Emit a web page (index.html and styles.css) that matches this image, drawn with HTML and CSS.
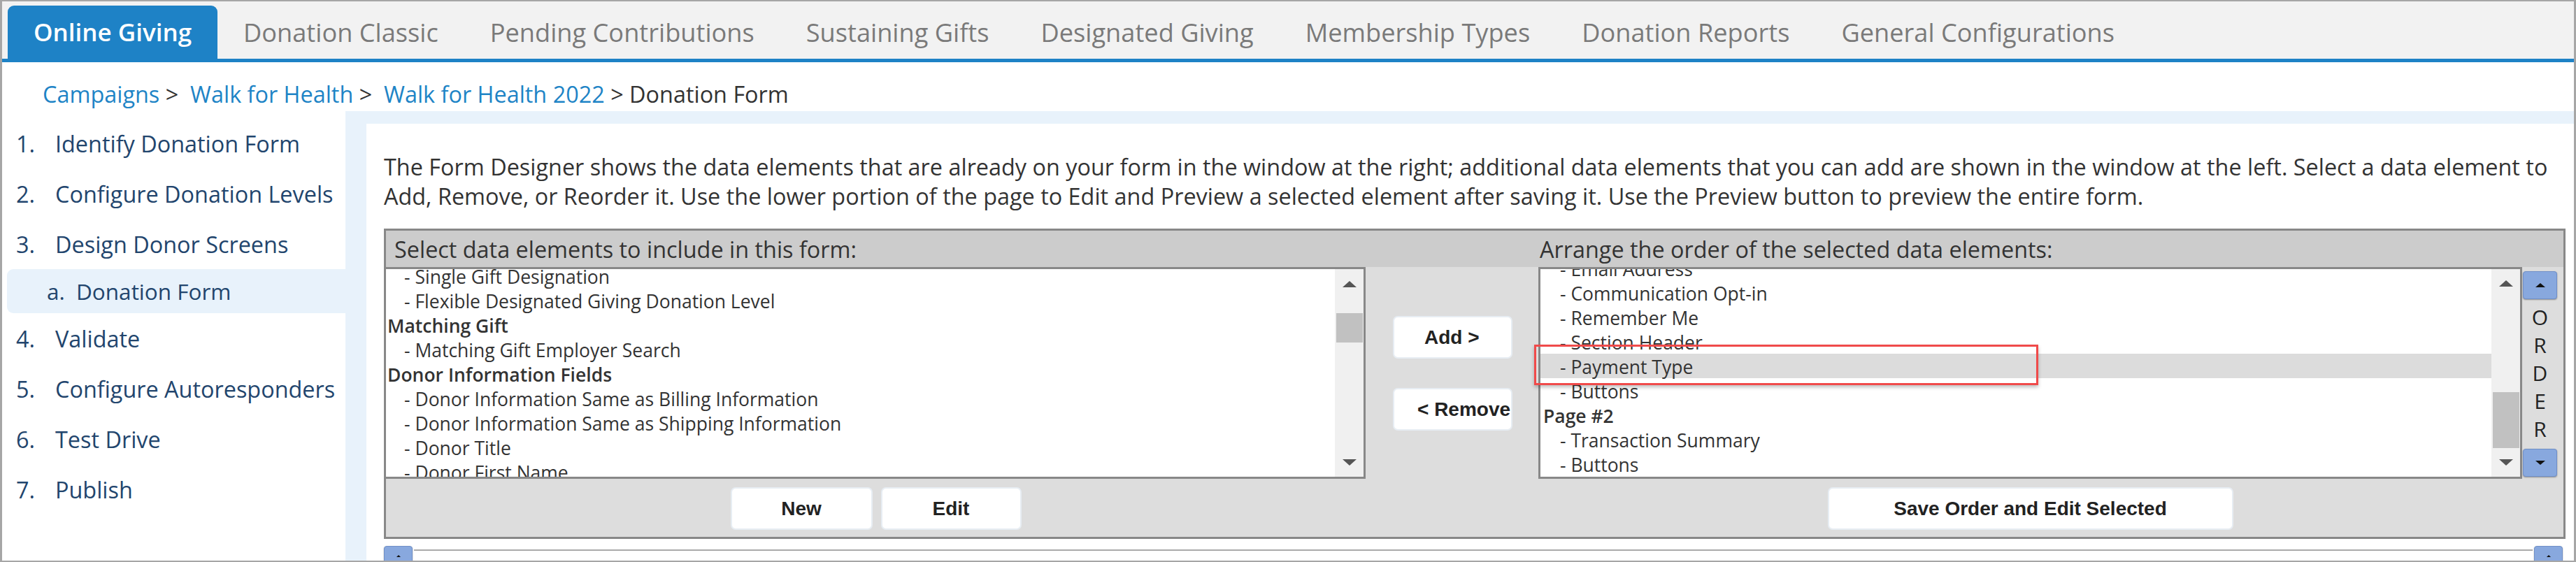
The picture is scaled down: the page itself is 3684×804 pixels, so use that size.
FILE: index.html
```html
<!DOCTYPE html>
<html lang="en">
<head>
    <meta charset="UTF-8">
    <meta name="viewport" content="width=device-width, initial-scale=1.0">
    <title>Donation Form - Form Designer</title>
    <link rel="stylesheet" href="styles.css">
</head>
<body>
<div class="frame">
    <nav class="tabs">
        <a class="tab active" href="#">Online Giving</a>
        <a class="tab" href="#">Donation Classic</a>
        <a class="tab" href="#">Pending Contributions</a>
        <a class="tab" href="#">Sustaining Gifts</a>
        <a class="tab" href="#">Designated Giving</a>
        <a class="tab" href="#">Membership Types</a>
        <a class="tab" href="#">Donation Reports</a>
        <a class="tab" href="#">General Configurations</a>
    </nav>

    <div class="crumbs">
        <a href="#">Campaigns</a> &gt;&nbsp; <a href="#">Walk for Health</a> &gt;&nbsp; <a href="#">Walk for Health 2022</a> &gt; Donation Form
    </div>

    <div class="layout">
        <ol class="steps">
            <li><span class="num">1.</span>Identify Donation Form</li>
            <li><span class="num">2.</span>Configure Donation Levels</li>
            <li><span class="num">3.</span>Design Donor Screens</li>
            <li class="sub"><span class="num">a.</span>Donation Form</li>
            <li><span class="num">4.</span>Validate</li>
            <li><span class="num">5.</span>Configure Autoresponders</li>
            <li><span class="num">6.</span>Test Drive</li>
            <li><span class="num">7.</span>Publish</li>
        </ol>

        <main class="content">
            <div class="panel">
                <p class="intro">The Form Designer shows the data elements that are already on your form in the window at the right; additional data elements that you can add are shown in the window at the left. Select a data element to<br>Add, Remove, or Reorder it. Use the lower portion of the page to Edit and Preview a selected element after saving it. Use the Preview button to preview the entire form.</p>

                <div class="designer">
                    <div class="hdr hdr-left">Select data elements to include in this form:</div>
                    <div class="hdr hdr-right">Arrange the order of the selected data elements:</div>

                    <div class="listbox lb-left">
                        <div class="items">
                            <ul class="rows rows-left">
                                <li class="opt">- Single Gift Designation</li>
                                <li class="opt">- Flexible Designated Giving Donation Level</li>
                                <li class="grp">Matching Gift</li>
                                <li class="opt">- Matching Gift Employer Search</li>
                                <li class="grp">Donor Information Fields</li>
                                <li class="opt">- Donor Information Same as Billing Information</li>
                                <li class="opt">- Donor Information Same as Shipping Information</li>
                                <li class="opt">- Donor Title</li>
                                <li class="opt">- Donor First Name</li>
                                <li class="opt">- Donor Last Name</li>
                            </ul>
                        </div>
                        <div class="sbar">
                            <div class="sbar-btn"><span class="tri-up"></span></div>
                            <div class="track"><div class="thumb thumb-left"></div></div>
                            <div class="sbar-btn"><span class="tri-down"></span></div>
                        </div>
                    </div>

                    <div class="movers">
                        <button class="mv-btn mv-add">Add &gt;</button>
                        <button class="mv-btn mv-remove">&lt; Remove</button>
                    </div>

                    <div class="listbox lb-right">
                        <div class="items">
                            <ul class="rows rows-right">
                                <li class="opt">- Email Address</li>
                                <li class="opt">- Communication Opt-in</li>
                                <li class="opt">- Remember Me</li>
                                <li class="opt">- Section Header</li>
                                <li class="opt selected">- Payment Type</li>
                                <li class="opt">- Buttons</li>
                                <li class="grp">Page #2</li>
                                <li class="opt">- Transaction Summary</li>
                                <li class="opt">- Buttons</li>
                            </ul>
                        </div>
                        <div class="sbar">
                            <div class="sbar-btn"><span class="tri-up"></span></div>
                            <div class="track"><div class="thumb thumb-right"></div></div>
                            <div class="sbar-btn"><span class="tri-down"></span></div>
                        </div>
                        <div class="callout"></div>
                    </div>

                    <div class="order">
                        <button class="blue-btn"><span class="mini-up"></span></button>
                        <div class="order-word"><span>O</span><span>R</span><span>D</span><span>E</span><span>R</span></div>
                        <button class="blue-btn"><span class="mini-down"></span></button>
                    </div>

                    <div class="actions act-left">
                        <button class="act-btn btn-new">New</button>
                        <button class="act-btn btn-edit">Edit</button>
                    </div>
                    <div class="actions act-right">
                        <button class="act-btn btn-save">Save Order and Edit Selected</button>
                    </div>
                </div>

                <div class="hscroll">
                    <button class="blue-btn small"><span class="mini-up"></span></button>
                    <div class="hline"></div>
                    <button class="blue-btn small"><span class="mini-up"></span></button>
                </div>
            </div>
        </main>
    </div>
</div>
</body>
</html>
```

FILE: styles.css
```css
* { box-sizing: border-box; }
html, body { margin: 0; padding: 0; }
body { font-family: "Open Sans", "Liberation Sans", Arial, sans-serif; color: #333; background: #fff; }
a { text-decoration: none; }
button { font-family: inherit; cursor: pointer; }

.frame { width: 3684px; height: 804px; border: solid #a6a6a6; border-width: 2px 3px; display: flex; flex-direction: column; overflow: hidden; }

/* top tabs */
.tabs { display: flex; background: #f2f2f2; padding: 6px 0 0 8px; border-bottom: 5px solid #1e82c6; flex: none; }
.tab { height: 76px; line-height: 76px; padding: 0 37px; font-size: 36.2px; font-weight: 400; color: #7a7a7a; white-space: nowrap; }
.tab.active { background: #1e82c6; color: #fff; border-radius: 9px 9px 0 0; font-size: 35px; font-weight: 600; }

/* breadcrumb */
.crumbs { height: 70px; padding: 20px 0 0 58px; line-height: 50px; font-size: 32.4px; color: #333; flex: none; white-space: nowrap; }
.crumbs a { color: #1e84c6; }

.layout { display: flex; flex: 1; min-height: 0; }

/* steps sidebar */
.steps { width: 491px; flex: none; list-style: none; margin: 0; padding: 10px 0 0 0; font-size: 32.4px; color: #22456d; }
.steps li { display: flex; height: 72px; line-height: 72px; padding-left: 20px; white-space: nowrap; }
.steps .num { width: 56px; flex: none; }
.steps li.sub { height: 63px; line-height: 63px; margin-left: 7px; padding-left: 57px; background: #e8f2fb; border-radius: 9px 0 0 9px; font-size: 31.5px; }
.steps li.sub .num { width: 42px; }

/* main area */
.content { flex: 1; background: #e8f2fb; padding: 18px 0 0 30px; min-width: 0; }
.panel { background: #fff; height: 100%; padding: 40px 12px 0 25px; }
.intro { margin: 0 0 26px; font-size: 32.4px; line-height: 42px; color: #333; white-space: nowrap; }

/* form designer box */
.designer { display: grid; grid-template-columns: 1401px 247px 1407px 59px; grid-template-rows: 52px 303px 83px; border: 3px solid #888; background: #ddd; }
.hdr { background: #ccc; font-size: 32.4px; line-height: 52px; color: #333; white-space: nowrap; }
.hdr-left { grid-column: 1 / 3; padding-left: 12px; }
.hdr-right { grid-column: 3 / 5; padding-left: 2px; }

.listbox { display: flex; background: #fff; border: 3px solid #888; position: relative; }
.lb-left { grid-column: 1; border-left: none; }
.lb-right { grid-column: 3; }
.items { flex: 1; overflow: hidden; }
.rows { list-style: none; margin: 0; padding: 0; font-size: 26.5px; color: #333; }
.rows-left { margin-top: -8px; }
.rows-right { margin-top: -19px; padding-left: 2px; }
.rows li { height: 35px; line-height: 39px; white-space: nowrap; }
.rows .opt { padding-left: 26px; }
.rows .grp { padding-left: 2px; font-weight: 600; }
.rows .selected { background: #dcdcdc; margin-left: -2px; padding-left: 28px; }

.sbar { width: 41px; flex: none; background: #f0f0f0; display: flex; flex-direction: column; }
.sbar-btn { height: 42px; display: flex; align-items: center; justify-content: center; }
.tri-up { border-left: 10px solid transparent; border-right: 10px solid transparent; border-bottom: 9px solid #555; }
.tri-down { border-left: 10px solid transparent; border-right: 10px solid transparent; border-top: 9px solid #555; }
.track { flex: 1; padding: 0 1px 0 2px; }
.thumb { background: #c1c1c1; }
.thumb-left { margin-top: 21px; height: 42px; }
.thumb-right { margin-top: 135px; height: 80px; }

.callout { position: absolute; left: -9px; top: 108px; width: 721px; height: 58px; border: 3px solid #f04a4a; box-shadow: 0 3px 5px rgba(0, 0, 0, 0.25); pointer-events: none; }

.movers { grid-column: 2; padding: 70px 0 0 39px; display: flex; flex-direction: column; gap: 42px; }
.mv-btn { width: 171px; height: 61px; background: #fff; border: 2px solid #e7edf3; border-radius: 7px; font-family: "Liberation Sans", Arial, sans-serif; font-size: 28px; font-weight: bold; color: #222; white-space: nowrap; overflow: hidden; text-align: left; }
.mv-add { padding: 0 0 0 43px; }
.mv-remove { padding: 0 0 0 33px; }

.order { grid-column: 4; grid-row: 2; padding: 6px 9px 0 1px; display: flex; flex-direction: column; align-items: center; }
.order-word { display: flex; flex-direction: column; align-items: center; margin: 6px 0 8px; font-size: 30px; line-height: 40px; color: #222; }
.blue-btn { width: 49px; height: 40px; padding: 0; background: #88a8de; border: 1px solid #6f8fc8; border-radius: 4px; box-shadow: 0 1px 2px rgba(0, 0, 0, 0.35); display: flex; align-items: center; justify-content: center; }
.mini-up { border-left: 7px solid transparent; border-right: 7px solid transparent; border-bottom: 6px solid #111; }
.mini-down { border-left: 7px solid transparent; border-right: 7px solid transparent; border-top: 6px solid #111; }

.actions { grid-row: 3; display: flex; justify-content: center; gap: 12px; padding-top: 12px; }
.act-left { grid-column: 1; }
.act-right { grid-column: 3; }
.act-btn { height: 61px; background: #fff; border: 2px solid #e7edf3; border-radius: 7px; font-family: "Liberation Sans", Arial, sans-serif; font-size: 28px; font-weight: bold; color: #222; }
.btn-new { width: 203px; }
.btn-edit { width: 201px; }
.btn-save { width: 580px; }

/* splitter bar under the designer */
.hscroll { display: flex; align-items: flex-start; margin: 10px 4px 0 0; }
.blue-btn.small { width: 41px; height: 30px; align-items: flex-start; padding-top: 12px; }
.blue-btn.small .mini-up { border-left-width: 3px; border-right-width: 3px; border-bottom-width: 3px; }
.hline { flex: 1; margin: 5px 2px 0; border-top: 2px solid #aaa; }
```
